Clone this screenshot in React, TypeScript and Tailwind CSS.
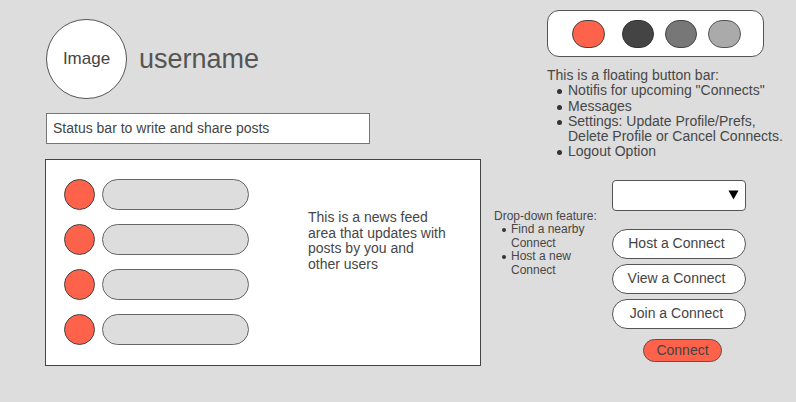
const FONT = "font-['Liberation_Sans',Arial,sans-serif]";

function Bullet({ children, small }: { children: React.ReactNode; small?: boolean }) {
  return (
    <li className={`flex ${small ? "gap-[5px] pl-[8px]" : "gap-[6px] pl-[10px]"}`}>
      <span
        className={`shrink-0 rounded-full bg-[#333] ${small ? "mt-[5px] h-[4px] w-[4px]" : "mt-[6px] h-[5px] w-[5px]"}`}
      />
      <span>{children}</span>
    </li>
  );
}

function FeedRow() {
  return (
    <div className="flex items-center gap-[7px]">
      <div className="h-[31px] w-[31px] rounded-full border border-[#444] bg-[#fe624b]" />
      <div className="h-[31px] w-[147px] rounded-full border border-[#666] bg-[#dddddd]" />
    </div>
  );
}

function ActionButton({ label }: { label: string }) {
  return (
    <button className="flex h-[30px] w-[134px] items-center justify-center rounded-[15px] border border-[#555] bg-white pr-[5px] text-[14px] text-[#444]">
      {label}
    </button>
  );
}

export default function App() {
  return (
    <div className={`flex h-[402px] w-[796px] bg-[#dddddd] text-[#474747] ${FONT}`}>
      {/* left column */}
      <div className="flex w-[481px] flex-col pl-[45px]">
        <div className="ml-px mt-[19px] flex items-center">
          <div className="flex h-[80px] w-[81px] items-center justify-center rounded-full border border-[#555] bg-white text-[17px] text-[#444]">
            Image
          </div>
          <span className="ml-[12px] text-[27px] leading-none text-[#555]">username</span>
        </div>
        <div className="ml-px mt-[14px] flex h-[31px] w-[324px] items-center border border-[#777] bg-white pl-[6px] text-[14px] text-[#444]">
          Status bar to write and share posts
        </div>
        <div className="mt-[15px] flex h-[207px] w-[436px] border border-[#444] bg-white">
          <div className="flex flex-col gap-[14px] pl-[18px] pt-[19px]">
            <FeedRow />
            <FeedRow />
            <FeedRow />
            <FeedRow />
          </div>
          <p className="ml-[59px] mt-[50px] w-[150px] text-[14px] leading-[15.6px] text-[#474747]">
            This is a news feed
            <br />
            area that updates with
            <br />
            posts by you and
            <br />
            other users
          </p>
        </div>
      </div>

      {/* right column */}
      <div className="flex flex-1 flex-col">
        <div className="ml-[66px] mt-[10px] flex h-[47px] w-[217px] items-center rounded-[12px] border border-[#555] bg-white pl-[24px]">
          <div className="h-[28px] w-[33px] rounded-full border border-[#444] bg-[#fe624b]" />
          <div className="ml-[17px] h-[28px] w-[32px] rounded-full border border-[#333] bg-[#444]" />
          <div className="ml-[11px] h-[28px] w-[32px] rounded-full border border-[#444] bg-[#777]" />
          <div className="ml-[11px] h-[28px] w-[33px] rounded-full border border-[#555] bg-[#aaa]" />
        </div>
        <div className="ml-[66px] mt-[11px] text-[14px] leading-[15.3px]">
          <p>This is a floating button bar:</p>
          <ul>
            <Bullet>Notifis for upcoming "Connects"</Bullet>
            <Bullet>Messages</Bullet>
            <Bullet>
              Settings: Update Profile/Prefs,
              <br />
              Delete Profile or Cancel Connects.
            </Bullet>
            <Bullet>Logout Option</Bullet>
          </ul>
        </div>

        <div className="ml-[13px] mt-[20px] flex">
          <div className="mt-[30px] w-[106px] text-[12px] leading-[13.5px]">
            <p>Drop-down feature:</p>
            <ul>
              <Bullet small>
                Find a nearby
                <br />
                Connect
              </Bullet>
              <Bullet small>
                Host a new
                <br />
                Connect
              </Bullet>
            </ul>
          </div>
          <div className="ml-[12px] flex flex-col">
            <div className="flex h-[31px] w-[134px] items-center justify-end rounded-[4px] border border-[#555] bg-white pr-[6px]">
              <svg width="11" height="10" viewBox="0 0 11 10">
                <polygon points="0.5,0.5 10.5,0.5 5.5,9.5" fill="#000" />
              </svg>
            </div>
            <div className="mt-[18px] flex flex-col gap-[5px]">
              <ActionButton label="Host a Connect" />
              <ActionButton label="View a Connect" />
              <ActionButton label="Join a Connect" />
            </div>
            <button className="ml-[31px] mt-[10px] flex h-[23px] w-[79px] items-center justify-center rounded-full border border-[#555] bg-[#fe624b] text-[14px] text-[#444]">
              Connect
            </button>
          </div>
        </div>
      </div>
    </div>
  );
}
